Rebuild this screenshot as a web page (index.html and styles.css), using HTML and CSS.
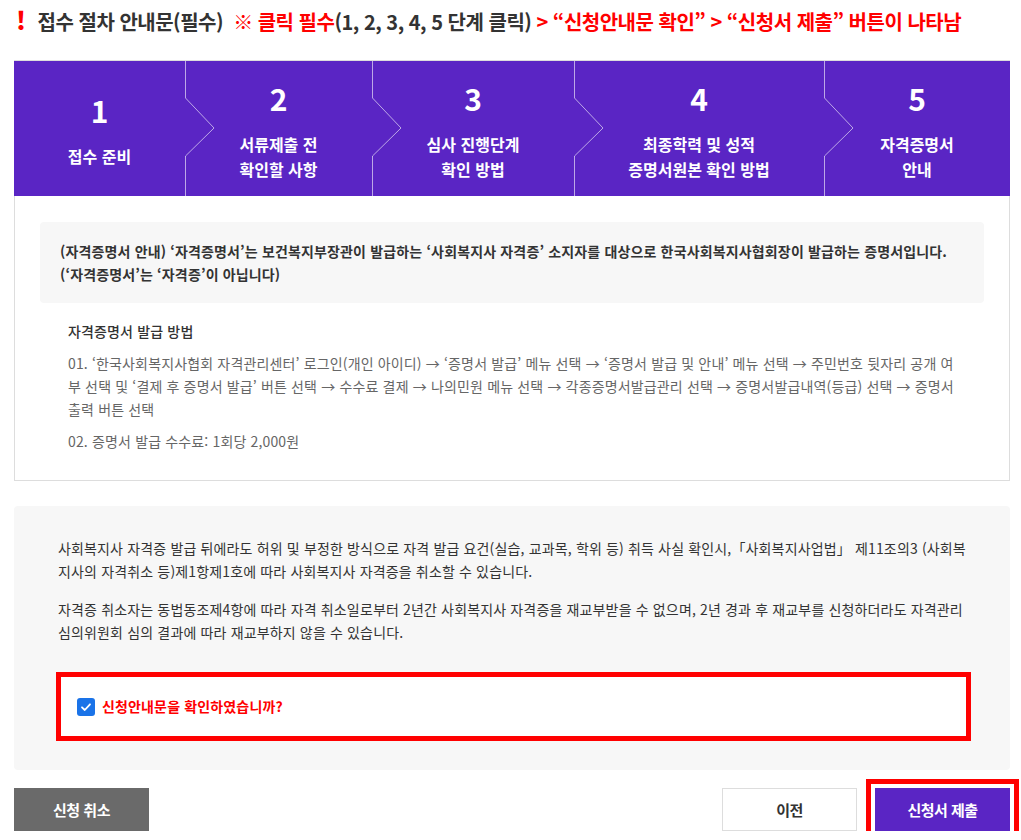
FILE: index.html
```html
<!DOCTYPE html>
<html lang="ko">
<head>
    <meta charset="UTF-8">
    <meta name="viewport" content="width=device-width, initial-scale=1.0">
    <title>접수 절차 안내문</title>
    <link rel="stylesheet" href="styles.css">
</head>
<body>
    <div class="container">
        <h2 class="page-title">
            <span class="mark">!</span>
            <span>접수 절차 안내문(필수)</span>
            <span class="red note">※ 클릭 필수</span><span>(1, 2, 3, 4, 5 단계 클릭)</span>
            <span class="red">&gt; “신청안내문 확인” &gt; “신청서 제출” 버튼이 나타남</span>
        </h2>

        <!-- 단계 안내 -->
        <div class="guide-panel">
            <div class="steps">
                <div class="step">
                    <div class="step-num">1</div>
                    <div class="step-label">접수 준비</div>
                </div>
                <div class="step">
                    <svg class="chevron" viewBox="0 0 30 135" width="30" height="135"><polyline points="0.5,0 0.5,37 29,67 0.5,95 0.5,135" /></svg>
                    <div class="step-num">2</div>
                    <div class="step-label">서류제출 전<br>확인할 사항</div>
                </div>
                <div class="step">
                    <svg class="chevron" viewBox="0 0 30 135" width="30" height="135"><polyline points="0.5,0 0.5,37 29,67 0.5,95 0.5,135" /></svg>
                    <div class="step-num">3</div>
                    <div class="step-label">심사 진행단계<br>확인 방법</div>
                </div>
                <div class="step">
                    <svg class="chevron" viewBox="0 0 30 135" width="30" height="135"><polyline points="0.5,0 0.5,37 29,67 0.5,95 0.5,135" /></svg>
                    <div class="step-num">4</div>
                    <div class="step-label">최종학력 및 성적<br>증명서원본 확인 방법</div>
                </div>
                <div class="step">
                    <svg class="chevron" viewBox="0 0 30 135" width="30" height="135"><polyline points="0.5,0 0.5,37 29,67 0.5,95 0.5,135" /></svg>
                    <div class="step-num">5</div>
                    <div class="step-label">자격증명서<br>안내</div>
                </div>
            </div>

            <div class="guide-body">
                <div class="info-box">
                    (자격증명서 안내) ‘자격증명서’는 보건복지부장관이 발급하는 ‘사회복지사 자격증’ 소지자를 대상으로 한국사회복지사협회장이 발급하는 증명서입니다.<br>
                    (‘자격증명서’는 ‘자격증’이 아닙니다)
                </div>
                <div class="how-to">
                    <h4>자격증명서 발급 방법</h4>
                    <p>01. ‘한국사회복지사협회 자격관리센터’ 로그인(개인 아이디) → ‘증명서 발급’ 메뉴 선택 → ‘증명서 발급 및 안내’ 메뉴 선택 → 주민번호 뒷자리 공개 여부 선택 및 ‘결제 후 증명서 발급’ 버튼 선택 → 수수료 결제 → 나의민원 메뉴 선택 → 각종증명서발급관리 선택 → 증명서발급내역(등급) 선택 → 증명서 출력 버튼 선택</p>
                    <p>02. 증명서 발급 수수료: 1회당 2,000원</p>
                </div>
            </div>
        </div>

        <!-- 유의사항 -->
        <div class="notice-box">
            <p>사회복지사 자격증 발급 뒤에라도 허위 및 부정한 방식으로 자격 발급 요건(실습, 교과목, 학위 등) 취득 사실 확인시,「사회복지사업법」 제11조의3 (사회복지사의 자격취소 등)제1항제1호에 따라 사회복지사 자격증을 취소할 수 있습니다.</p>
            <p>자격증 취소자는 동법동조제4항에 따라 자격 취소일로부터 2년간 사회복지사 자격증을 재교부받을 수 없으며, 2년 경과 후 재교부를 신청하더라도 자격관리 심의위원회 심의 결과에 따라 재교부하지 않을 수 있습니다.</p>

            <label class="confirm-box">
                <span class="check">
                    <svg viewBox="0 0 18 18" width="18" height="18"><polyline points="5,9.3 7.8,12 13,6.3" /></svg>
                </span>
                <span>신청안내문을 확인하였습니까?</span>
            </label>
        </div>

        <div class="actions">
            <button class="btn btn-gray">신청 취소</button>
            <div class="actions-right">
                <button class="btn btn-line">이전</button>
                <button class="btn btn-purple">신청서 제출</button>
            </div>
        </div>
    </div>
</body>
</html>
```

FILE: styles.css
```css
* {
    margin: 0;
    padding: 0;
    box-sizing: border-box;
}

body {
    font-family: "Noto Sans CJK KR", "Noto Sans", sans-serif;
    color: #333;
    background: #fff;
    letter-spacing: 0.15px;
}

.container {
    width: 996px;
    margin-left: 14px;
}

.page-title {
    font-size: 20px;
    font-weight: 700;
    line-height: 30px;
    height: 37px;
    padding-top: 7px;
    margin-bottom: 23px;
    letter-spacing: -0.5px;
    white-space: nowrap;
}

.page-title .mark {
    color: #f00;
    font-size: 25px;
    font-weight: 900;
    line-height: 0;
    margin: 0 7px 0 2px;
}

.red {
    color: #f00;
}

.note {
    margin-left: 5px;
}

.guide-panel {
    border: 1px solid #ddd;
}

.steps {
    display: grid;
    grid-template-columns: 171px 187px 202px 250px 1fr;
    height: 135px;
    background: #5a25c4;
    margin: 0 -1px;
}

.step {
    position: relative;
    display: flex;
    flex-direction: column;
    justify-content: center;
    align-items: center;
    color: #fff;
    text-align: center;
    letter-spacing: 0;
}

.chevron {
    position: absolute;
    left: 0;
    top: 0;
}

.chevron polyline {
    fill: none;
    stroke: rgba(255, 255, 255, 0.6);
    stroke-width: 1;
}

.step-num {
    font-size: 30px;
    font-weight: 700;
    line-height: 44px;
    margin-bottom: 12px;
}

.step-label {
    font-size: 16px;
    font-weight: 700;
    line-height: 25px;
}

.guide-body {
    padding: 26px 25px 27px;
}

.info-box {
    background: #f7f7f7;
    border-radius: 4px;
    padding: 18px 20px 12px;
    font-size: 14px;
    font-weight: 700;
    line-height: 23px;
    min-height: 81px;
}

.how-to {
    padding: 17px 28px 0;
    font-size: 14px;
    line-height: 23px;
}

.how-to h4 {
    font-weight: 500;
    color: #333;
}

.how-to p {
    color: #666;
    margin-top: 9px;
}

.notice-box {
    margin-top: 25px;
    background: #f7f7f7;
    border-radius: 4px;
    padding: 31px 39px 29px 42px;
    font-size: 14px;
    line-height: 23px;
}

.notice-box p {
    padding-left: 2px;
    margin-bottom: 15px;
}

.notice-box p:last-of-type {
    margin-bottom: 28px;
}

.confirm-box {
    display: flex;
    align-items: center;
    gap: 7px;
    height: 69px;
    border: 5px solid #f00;
    background: #fff;
    padding-left: 16px;
    color: #f00;
    font-weight: 700;
    cursor: pointer;
}

.check {
    width: 18px;
    height: 18px;
    border-radius: 3px;
    background: #1a73e8;
    display: flex;
}

.check polyline {
    fill: none;
    stroke: #fff;
    stroke-width: 1.8;
    stroke-linecap: round;
    stroke-linejoin: round;
}

.actions {
    display: flex;
    justify-content: space-between;
    margin-top: 18px;
}

.actions-right {
    display: flex;
    gap: 18px;
}

.btn {
    width: 135px;
    height: 43px;
    border: none;
    font-family: inherit;
    font-size: 15px;
    font-weight: 700;
    letter-spacing: -0.5px;
    cursor: pointer;
}

.btn-gray {
    background: #6a6a6a;
    color: #fff;
}

.btn-line {
    background: #fff;
    color: #333;
    border: 1px solid #ddd;
}

.btn-purple {
    background: #5a25c4;
    color: #fff;
    outline: 5px solid #f00;
    outline-offset: 4px;
}
```
